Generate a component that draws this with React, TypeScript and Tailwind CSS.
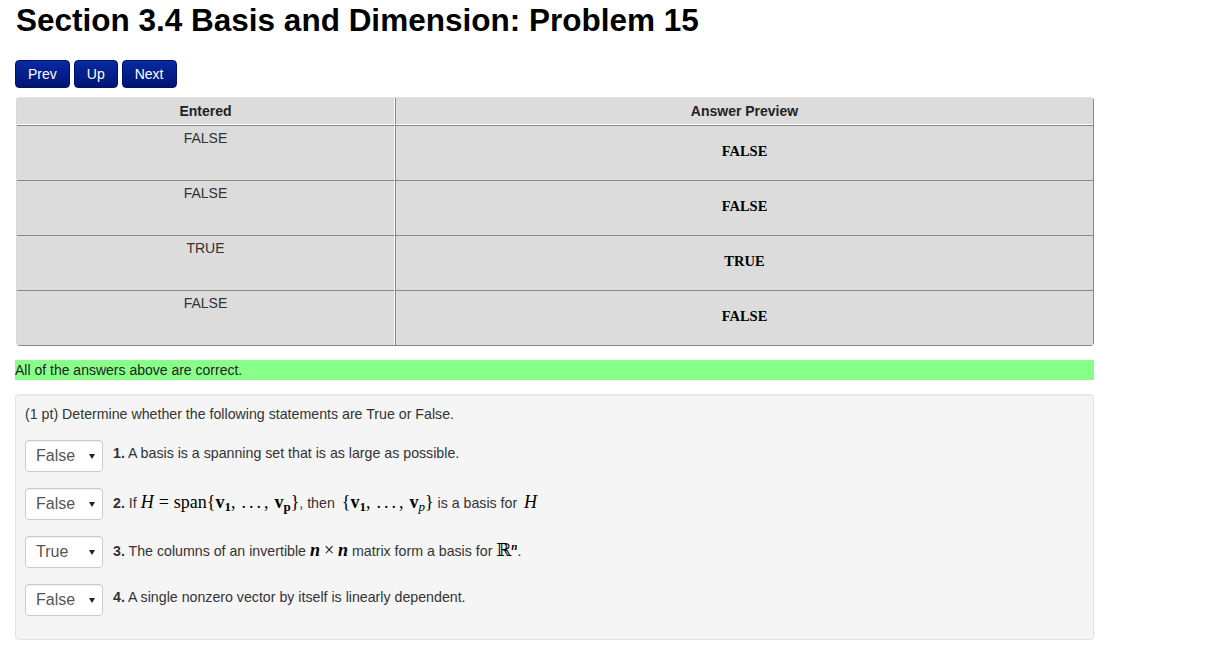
import React from 'react'

const rows = [
  { entered: 'FALSE', preview: 'FALSE' },
  { entered: 'FALSE', preview: 'FALSE' },
  { entered: 'TRUE', preview: 'TRUE' },
  { entered: 'FALSE', preview: 'FALSE' },
]

function NavButton({ label }: { label: string }) {
  return (
    <button className="h-[28px] rounded-[4px] border border-[#00106a] bg-gradient-to-b from-[#0b2aa3] to-[#001473] px-[12px] text-[14px] leading-none text-white">
      {label}
    </button>
  )
}

function Select({ value }: { value: string }) {
  return (
    <div className="relative h-[32px] w-[78px] shrink-0">
      <select
        defaultValue={value}
        className="h-full w-full appearance-none rounded-[4px] border border-[#cccccc] bg-white pl-[10px] text-[16px] text-[#555] shadow-[inset_0_1px_1px_rgba(0,0,0,0.075)] outline-none"
      >
        <option>?</option>
        <option>True</option>
        <option>False</option>
      </select>
      <svg className="pointer-events-none absolute right-[8px] top-[14px]" width="6" height="5" viewBox="0 0 6 5">
        <path d="M0 0 H6 L3 5 Z" fill="#222" />
      </svg>
    </div>
  )
}

const M = ({ children, className = '' }: { children: React.ReactNode; className?: string }) => (
  <span className={`font-['Liberation_Serif','DejaVu_Serif',serif] text-[18px] text-black ${className}`}>{children}</span>
)

function Vec({ sub, italicSub }: { sub: string; italicSub?: boolean }) {
  return (
    <>
      <span className="font-bold">v</span>
      <sub className={`text-[13px] ${italicSub ? 'italic' : 'font-bold'}`}>{sub}</sub>
    </>
  )
}

// comma + dots list like MathJax "v1, ..., vp"
function VecList({ italicSub }: { italicSub?: boolean }) {
  return (
    <>
      {'{'}
      <Vec sub="1" />
      <span className="mr-[6px]">,</span>
      <span className="tracking-[3px]">...</span>
      <span className="mr-[6px]">,</span>
      <Vec sub="p" italicSub={italicSub} />
      {'}'}
    </>
  )
}

export default function App() {
  return (
    <div className="min-h-[649px] bg-white px-[15px] pt-[2px] font-['Liberation_Sans',Arial,sans-serif] text-[14px] text-[#333]">
      <h1 className="ml-[1px] text-[31.5px] font-bold leading-[36px] text-black">
        Section 3.4 Basis and Dimension: Problem 15
      </h1>

      <div className="mt-[22px] flex gap-[4px]">
        <NavButton label="Prev" />
        <NavButton label="Up" />
        <NavButton label="Next" />
      </div>

      {/* attempt results */}
      <table className="ml-[1px] mt-[9px] w-[1078px] border-separate border-spacing-0 rounded-[4px] border border-b-[#888] border-l-[#d8d8d8] border-r-[#888] border-t-[#e0e0e0]">
        <colgroup>
          <col className="w-[378px]" />
          <col />
        </colgroup>
        <thead>
          <tr className="h-[27px]">
            <th className="border-b border-r border-b-white border-r-white bg-[#dcdcdc] text-center text-[14px] font-bold text-[#222]">
              Entered
            </th>
            <th className="border-b border-l border-b-white border-l-[#888] bg-[#dcdcdc] text-center text-[14px] font-bold text-[#222]">
              Answer Preview
            </th>
          </tr>
        </thead>
        <tbody>
          {rows.map((r, i) => (
            <tr key={i} className="h-[55px]">
              <td className="border-r border-t border-r-white border-t-[#888] bg-[#dcdcdc] pt-[2px] text-center align-top leading-[20px] text-[#333]">
                {r.entered}
              </td>
              <td className="border-l border-t border-l-[#888] border-t-[#888] bg-[#dcdcdc] pb-[2px] text-center align-middle font-['Liberation_Serif',serif] text-[14.5px] font-bold text-black">
                {r.preview}
              </td>
            </tr>
          ))}
        </tbody>
      </table>

      <div className="mt-[14px] h-[20px] w-[1079px] bg-[#88ff88] leading-[20px] text-[#222]">
        All of the answers above are correct.
      </div>

      {/* problem */}
      <div className="mt-[14px] h-[246px] w-[1079px] rounded-[4px] border border-[#e3e3e3] bg-[#f5f5f5] px-[9px] pt-[9px] text-[14.2px] shadow-[inset_0_1px_1px_rgba(0,0,0,0.05)]">
        <p className="leading-[20px]">(1 pt) Determine whether the following statements are True or False.</p>

        <div className="mt-[16px] flex flex-col gap-[16px]">
          <div className="flex items-center gap-[10px]">
            <Select value="False" />
            <span className="-mt-[4px]">
              <b>1.</b> A basis is a spanning set that is as large as possible.
            </span>
          </div>

          <div className="flex items-center gap-[10px]">
            <Select value="False" />
            <span className="-mt-[4px]">
              <b>2.</b> If <M className="italic">H</M>
              <M className="mx-[5px]">=</M>
              <M>
                span
                <VecList />
              </M>
              , then{' '}
              <M className="ml-[3px]">
                <VecList italicSub />
              </M>{' '}
              is a basis for <M className="ml-[3px] italic">H</M>
            </span>
          </div>

          <div className="flex items-center gap-[10px]">
            <Select value="True" />
            <span className="-mt-[4px]">
              <b>3.</b> The columns of an invertible <M className="font-bold italic">n</M>
              <M className="mx-[4px] text-[17px]">×</M>
              <M className="font-bold italic">n</M> matrix form a basis for{' '}
              <M className="text-[16px]">
                ℝ<sup className="text-[11px] font-bold italic">n</sup>
              </M>
              .
            </span>
          </div>

          <div className="flex items-center gap-[10px]">
            <Select value="False" />
            <span className="-mt-[4px]">
              <b>4.</b> A single nonzero vector by itself is linearly dependent.
            </span>
          </div>
        </div>
      </div>
    </div>
  )
}
